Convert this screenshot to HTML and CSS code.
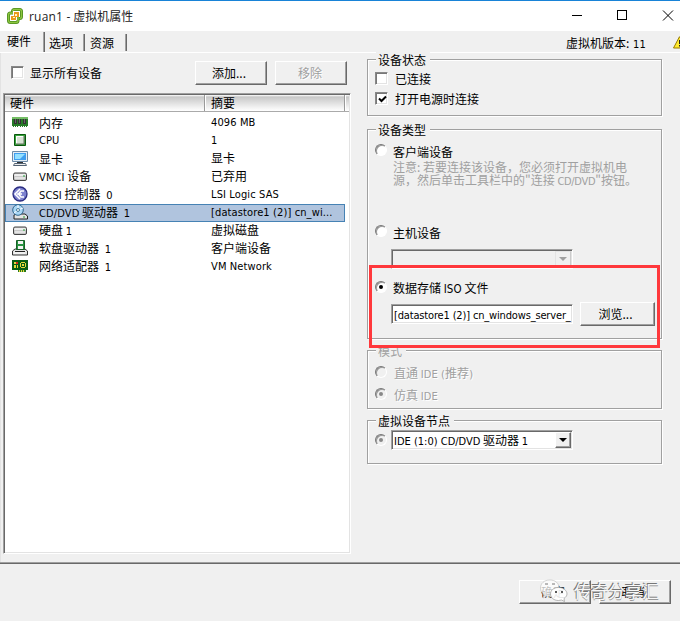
FILE: index.html
```html
<!DOCTYPE html>
<html lang="zh-CN">
<head>
<meta charset="utf-8">
<title>ruan1 - 虚拟机属性</title>
<link rel="stylesheet" href="styles.css">
</head>
<body>
<header class="titlebar">
  <svg class="logo" width="16" height="16" viewBox="0 0 16 16"><rect x="5.500" y="1.500" width="9" height="9" rx="2" fill="none" stroke="#4c8b1c" stroke-width="3"/><rect x="5.500" y="1.500" width="9" height="9" rx="2" fill="none" stroke="#8cc63f" stroke-width="1.400"/><rect x="1.500" y="5" width="9.500" height="9.500" rx="2" fill="#fff" stroke="#4c8b1c" stroke-width="3"/><rect x="1.500" y="5" width="9.500" height="9.500" rx="2" fill="none" stroke="#8cc63f" stroke-width="1.400"/><path d="M6 3h7v6h-3v3H3V7h3z" fill="#fff"/><path d="M4 8h3V4h5v5H9v3H4z" fill="#e99a19"/><path d="M6 9h2V6h2v2H8v2H6z" fill="#fff3c4"/></svg>
  <h1 class="title"><span>ruan1 -</span> 虚拟机属性</h1>
  <svg class="controls" width="103" height="12" viewBox="0 0 103 12" shape-rendering="crispEdges"><path d="M0 5.500h10M45.500.5h9v9h-9z" fill="none" stroke="#000"/><path d="M91 .5l10 10m0-10l-10 10" fill="none" stroke="#000" shape-rendering="auto"/></svg>
</header>
<nav class="tabs">
  <span class="tab active">硬件</span><span class="tab">选项</span><span class="tab last">资源</span>
  <span class="version">虚拟机版本: <span class="en">11</span></span>
  <svg class="warn" width="13" height="13" viewBox="0 0 13 13"><path d="M6.500.7L12.500 12H.5z" fill="#ffe92e" stroke="#987b00"/><path d="M6 4h1.500v4H6zM6 9h1.500v1.500H6z" fill="#222"/></svg>
</nav>
<main class="content">
  <section class="left">
    <div class="toolbar">
      <span class="check"></span><span class="label">显示所有设备</span>
      <button class="btn">添加...</button><button class="btn disabled">移除</button>
    </div>
    <div class="list">
      <div class="head"><span class="c1">硬件</span><span class="c2">摘要</span><span class="c3"></span></div>
      <div class="row"><svg width="16" height="16" viewBox="0 0 16 16" shape-rendering="crispEdges"><path d="M0 3h16v9H0z" fill="#267a27"/><path d="M0 3h16v2H0z" fill="#74bd65"/><path d="M2 5h3v5H2zM6 5h3v5H6zM11 5h3v5h-3z" fill="#333"/><path d="M3 5h1v4H3zM7 5h1v4H7zM12 5h1v4h-1z" fill="#666"/><path d="M1 12h1v1H1zM3 12h1v1H3zM5 12h1v1H5zM8 12h1v1H8zM10 12h1v1h-1zM12 12h1v1h-1zM14 12h1v1h-1z" fill="#287927"/></svg><span class="name">内存</span><span class="value en">4096 MB</span></div>
      <div class="row"><svg width="16" height="16" viewBox="0 0 16 16"><path d="M2.500 2.500h11v11h-11z" fill="#39a33d" stroke="#08590c"/><path d="M4 4h8v8H4z" fill="#d8e2d4"/><path d="M4.500 11.500V4.500h7" stroke="#fff" fill="none"/><path d="M12 4v8H4" stroke="#62705f" fill="none"/></svg><span class="name en">CPU</span><span class="value en">1</span></div>
      <div class="row"><svg width="16" height="16" viewBox="0 0 16 16"><path d="M.5 1.500h15v10H.5z" fill="#e4edf5" stroke="#6c8ba8"/><path d="M2 3h12v7H2z" fill="#3f9ff0"/><path d="M3 4h10L8 9H3z" fill="#93e0ff"/><path d="M5 12h6v1H5z" fill="#333"/><path d="M2.500 13.500h11l1 2h-13z" fill="#eee" stroke="#536273"/></svg><span class="name">显卡</span><span class="value">显卡</span></div>
      <div class="row"><svg width="16" height="16" viewBox="0 0 16 16"><rect x="1.500" y="5" width="13" height="7.500" rx="1.500" fill="#c8c8c8" stroke="#444"/><path d="M3 6h10l1 2H2z" fill="#eee"/><path d="M3 10h10" stroke="#fff"/><path d="M11 8h2" stroke="#26a33c"/></svg><span class="name"><span class="en">VMCI</span> 设备</span><span class="value">已弃用</span></div>
      <div class="row"><svg width="16" height="16" viewBox="0 0 16 16"><circle cx="8" cy="8" r="7" fill="#7d82cf" stroke="#292b80" stroke-width="1.300"/><path d="M8 3L3 8l5 5M5 8h5M12 5H9L6.500 8 9 11h3" fill="none" stroke="#fff" stroke-width="1.600"/></svg><span class="name"><span class="en">SCSI</span> 控制器 <span class="en num">0</span></span><span class="value en">LSI Logic SAS</span></div>
      <div class="row selected"><svg width="16" height="16" viewBox="0 0 16 16"><path d="M4 10h9l2.500 2v3H2v-4z" fill="#e4e4e4" stroke="#222"/><circle cx="6" cy="6" r="5.300" fill="#a9d7f6" stroke="#32678e"/><path d="M6 1v5L2 9M6 6l5-2" fill="none" stroke="#fff"/><circle cx="6" cy="6" r="1.500" fill="#fff" stroke="#477c9c"/><path d="M11 13h2" stroke="#26a33c"/></svg><span class="name"><span class="en">CD/DVD</span> 驱动器 <span class="en num">1</span></span><span class="value en">[datastore1 (2)] cn_wi...</span></div>
      <div class="row"><svg width="16" height="16" viewBox="0 0 16 16"><rect x="1.500" y="5" width="13" height="7.500" rx="1.500" fill="#c8c8c8" stroke="#444"/><path d="M3 6h10l1 2H2z" fill="#eee"/><path d="M3 10h10" stroke="#fff"/><path d="M11 8h2" stroke="#26a33c"/></svg><span class="name">硬盘 <span class="en">1</span></span><span class="value">虚拟磁盘</span></div>
      <div class="row"><svg width="16" height="16" viewBox="0 0 16 16"><path d="M3 9h10l2.500 2v4H.5v-4z" fill="#e4e4e4" stroke="#333"/><path d="M4.500.5h8v9h-8z" fill="#299341" stroke="#176026"/><path d="M6 1h5v3H6zM6 6h5v3H6z" fill="#f4f4f4"/><path d="M3 11.500h10" stroke="#222"/><path d="M2 13h11" stroke="#fff"/></svg><span class="name">软盘驱动器 <span class="en num">1</span></span><span class="value">客户端设备</span></div>
      <div class="row"><svg width="16" height="16" viewBox="0 0 16 16" shape-rendering="crispEdges"><path d="M0 2h16v10H0z" fill="#075e13"/><path d="M2 4h2v2H2zM2 7h2v3H2zM5 7h1v3H5z" fill="#e4d83c"/><path d="M4 4h2v2H4z" fill="#d62a1b"/><path d="M9 4h4v1H9zM8 5h1v4H8zM13 5h1v4h-1zM9 9h4v1H9zM10 6h2v2h-2z" fill="#e4d83c"/><path d="M6 12h8v2H6z" fill="#27781d"/><path d="M7 12h1v2H7zM9 12h1v2H9zM11 12h1v2h-1z" fill="#e4d83c"/></svg><span class="name">网络适配器 <span class="en num">1</span></span><span class="value en">VM Network</span></div>
    </div>
  </section>
  <section class="right">
    <div class="group state">
      <span class="legend">设备状态</span>
      <div class="option"><span class="check"></span><span class="label">已连接</span></div>
      <div class="option"><span class="check"><svg width="9" height="9" viewBox="0 0 9 9"><path d="M1 3.500L3.500 6 8 1.500" fill="none" stroke="#000" stroke-width="2"/></svg></span><span class="label">打开电源时连接</span></div>
    </div>
    <div class="group type">
      <span class="legend">设备类型</span>
      <div class="option"><span class="radio"></span><span class="label">客户端设备</span></div>
      <p class="hint">注意: 若要连接该设备，您必须打开虚拟机电<br>源，然后单击工具栏中的"连接 <span class="en">CD/DVD</span>"按钮。</p>
      <div class="option host"><span class="radio"></span><span class="label">主机设备</span></div>
      <div class="field combo off"><span class="drop"></span></div>
      <div class="option iso"><span class="radio on"></span><span class="label">数据存储 <span class="en">ISO</span> 文件</span></div>
      <div class="browse"><div class="field"><span class="en">[datastore1 (2)] cn_windows_server_</span></div><button class="btn">浏览...</button></div>
    </div>
    <div class="group mode">
      <span class="legend">模式</span>
      <div class="option"><span class="radio"></span><span class="label">直通 <span class="en">IDE (</span>推荐<span class="en">)</span></span></div>
      <div class="option"><span class="radio on"></span><span class="label">仿真 <span class="en">IDE</span></span></div>
    </div>
    <div class="group node">
      <span class="legend">虚拟设备节点</span>
      <div class="nodeline"><span class="radio on dim"></span><div class="field combo"><span class="text"><span class="en">IDE (1:0) CD/DVD</span> 驱动器 <span class="en">1</span></span><span class="drop"></span></div></div>
    </div>
  </section>
</main>
<footer class="footer"><button class="btn">确定</button><button class="btn">取消</button></footer>
<div class="highlight"></div>
<div class="watermark">
  <svg width="28" height="24" viewBox="0 0 28 24"><path d="M10 1C4 1 .5 4.500.5 9c0 3 1.500 5 3.500 6.500L3 19l4-2c7 1 12-3 12-8s-4-8-9-8z" fill="#fff" fill-opacity=".75" stroke="#bbb" stroke-width=".6"/><path d="M18.500 8.500c-5 0-8 3-8 6.500s3 6.500 8 6.500l3-.5 3 1.500-.5-3c2-1.500 3-3 3-4.500 0-3.500-3.500-6.500-8.500-6.500z" fill="#fff" fill-opacity=".9" stroke="#999" stroke-width=".7"/><path d="M5 5h3M12 5h3" stroke="#777"/><circle cx="16" cy="13" r="1" fill="#222"/><circle cx="22" cy="13" r="1" fill="#222"/></svg>
  <span>传奇分享汇</span>
</div>
</body>
</html>
```
FILE: styles.css
```css
* { box-sizing: border-box; }
body { margin: 0; width: 680px; height: 621px; overflow: hidden; position: relative; display: flex; flex-direction: column; background: #f0f0f0; color: #000; font: 12px/16px "Noto Sans CJK SC", sans-serif; }
svg { display: block; flex: none; }
.en { font-family: "DejaVu Sans Condensed", "DejaVu Sans", sans-serif; font-stretch: condensed; font-size: 11px; letter-spacing: .12px; }
.titlebar { height: 31px; flex: none; border-top: 1px solid #1883d7; background: #fff; display: flex; align-items: center; padding-left: 7px; }
.title { font-size: 12px; font-weight: 400; margin: 0 0 0 6px; flex: 1; color: #222; }
.title span { font-family: "Open Sans", sans-serif; font-size: 12px; letter-spacing: .2px; }
.controls { margin-right: 5px; }
.tabs { height: 22px; flex: none; display: flex; align-items: flex-start; border-bottom: 1px solid #fff; padding-top: 1px; }
.tab { height: 17px; flex: none; margin-top: 2px; border-right: 1px solid #696969; box-shadow: inset -1px 0 #a0a0a0; padding: 0 0 0 4px; width: 40px; line-height: 18px; white-space: nowrap; }
.tab.active { height: 20px; margin-top: 0; width: 45px; padding-left: 7px; line-height: 18px; }
.tab.last { width: 42px; padding-left: 5px; }
.version { flex: none; margin: 3px 0 0 439px; width: 107px; white-space: nowrap; }
.version .en { margin-left: 1px; }
.warn { margin-top: 4px; }
.content { height: 509px; flex: none; display: flex; border-left: 1px solid #e3e3e3; }
.left { width: 348px; margin-left: 2px; }
.toolbar { height: 40px; padding-top: 8px; display: flex; align-items: flex-start; }
.toolbar .check { margin: 5px 0 0 8px; }
.toolbar .label { margin: 4px 0 0 6px; width: 165px; }
.check { width: 13px; height: 13px; flex: none; background: #fff; border: 1px solid; border-color: #888 #fff #fff #888; box-shadow: inset 1px 1px #777, inset -1px -1px #e3e3e3; padding: 1px; }
.check svg { margin: 1px; }
.btn { width: 72px; height: 24px; flex: none; padding: 0 4px 0 0; border: 1px solid; border-color: #fff #696969 #696969 #fff; box-shadow: inset -1px -1px #a0a0a0; background: #f0f0f0; color: #000; font: 12px/16px "Noto Sans CJK SC", sans-serif; }
.toolbar .btn + .btn { margin-left: 8px; }
.btn.disabled { color: #a0a0a0; text-shadow: 1px 1px #fff; padding: 0 2px 0 0; }
.list { height: 461px; width: 348px; border: 1px solid; border-color: #a0a0a0 #fff #fff #a0a0a0; box-shadow: inset 1px 1px #696969, inset -1px -1px #e3e3e3; background: #fff; padding: 1px; }
.head { display: flex; height: 17px; line-height: 15px; background: linear-gradient(#fff, #c8c8c8 12%, #f0f0f0 75%, #fff); border-bottom: 1px solid #aaa; margin-bottom: 2px; }
.head span { border-right: 1px solid #999; box-shadow: 1px 0 #fff; }
.head .c1 { width: 200px; padding-left: 5px; }
.head .c2 { width: 140px; padding-left: 6px; }
.head .c3 { border: 0; }
.row { width: 340px; height: 18px; display: flex; align-items: center; padding: 0 0 0 7px; white-space: nowrap; line-height: 16px; }
.row svg { margin-bottom: 2px; }
.row.selected { background: #b0c4de; border: 1px solid #4682b4; padding-left: 6px; }
.name { width: 172px; margin-left: 11px; padding-bottom: 1px; }
.value { padding-bottom: 2px; }
.row > .en { padding-bottom: 0; }
.num { margin-left: 3px; }
.right { margin-left: 16px; width: 296px; }
.group { position: relative; border: 1px solid #a0a0a0; width: 295px; box-shadow: 1px 1px #fff, inset 1px 1px #fff; }
.legend { position: absolute; left: 8px; top: -8px; background: #f0f0f0; padding: 0 4px 0 2px; line-height: 16px; }
.option { height: 20px; display: flex; align-items: flex-start; padding-left: 7px; white-space: nowrap; }
.option .label { margin-left: 6px; line-height: 16px; }
.option .label .en { font-size: 11.500px; }
.state { height: 57px; margin-top: 6px; padding-top: 12px; }
.state .label { margin-left: 7px; line-height: 14px; }
.type { height: 210px; margin-top: 13px; padding-top: 14px; }
.radio { width: 12px; height: 12px; flex: none; border-radius: 50%; border: 1px solid; border-color: #777 #fff #fff #777; background: #fff; display: flex; align-items: center; justify-content: center; box-shadow: inset 1px 1px #999; }
.radio.on::after { content: ""; width: 4px; height: 4px; border-radius: 50%; background: #000; }
.radio.dim, .mode .radio { background: #f0f0f0; }
.radio.dim::after, .mode .radio::after { background: #888; }
.hint { margin: -4px 0 0 25px; height: 65px; color: #a0a0a0; line-height: 13px; white-space: nowrap; }
.hint .en { letter-spacing: -.3px; }
.field { width: 182px; height: 20px; border: 1px solid; border-color: #a0a0a0 #fff #fff #a0a0a0; box-shadow: inset 1px 1px #696969, inset -1px -1px #e3e3e3; background: #fff; padding: 1px 1px 1px 2px; line-height: 16px; overflow: hidden; white-space: nowrap; }
.combo { display: flex; justify-content: space-between; }
.type .combo { margin: 4px 0 0 23px; background: #f0f0f0; justify-content: flex-end; }
.drop { width: 16px; height: 16px; flex: none; background: #f0f0f0; border: 1px solid; border-color: #fff #696969 #696969 #fff; box-shadow: inset -1px -1px #a0a0a0; display: flex; align-items: center; justify-content: center; }
.drop::after { content: ""; border: 4px solid transparent; border-top-color: #000; border-bottom: 0; }
.off .drop { border-color: #e3e3e3 #ccc #ccc #e3e3e3; box-shadow: none; }
.off .drop::after { border-top-color: #a0a0a0; }
.iso { margin-top: 12px; }
.iso .label { line-height: 14px; }
.browse { display: flex; align-items: center; margin: 1px 0 0 23px; }
.browse .field { line-height: 15px; }
.browse .field .en { letter-spacing: -.16px; }
.browse .btn { margin-left: 7px; width: 75px; }
.mode { height: 59px; margin-top: 11px; padding-top: 15px; color: #a0a0a0; }
.mode .option { height: 22px; }
.mode .label { margin-left: 7px; line-height: 14px; text-shadow: 1px 1px #fff; }
.mode .option .label .en { font-size: 11px; }
.node { height: 44px; margin-top: 11px; }
.nodeline { display: flex; align-items: center; padding: 9px 0 0 7px; }
.nodeline .field { margin-left: 4px; }
.nodeline .en { letter-spacing: 0; }
.footer { height: 59px; flex: none; border-top: 1px solid #a0a0a0; box-shadow: inset 0 1px #696969; padding: 17px 0 0 519px; display: flex; gap: 8px; }
.highlight { position: absolute; left: 369px; top: 265px; width: 291px; height: 83px; border: 3px solid #ff383c; }
.watermark { position: absolute; left: 540px; top: 579px; display: flex; align-items: center; gap: 6px; font-size: 17px; line-height: 24px; color: #f8f8f8; text-shadow: -1px -1px #777, 0 1px #999; white-space: nowrap; }
```
